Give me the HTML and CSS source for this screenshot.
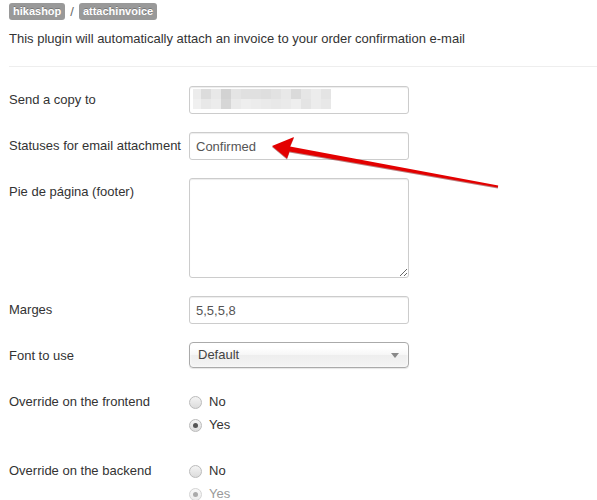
FILE: index.html
```html
<!DOCTYPE html>
<html lang="en">
<head>
  <meta charset="UTF-8" />
  <meta name="viewport" content="width=device-width, initial-scale=1.0" />
  <title>attachinvoice</title>
  <link rel="stylesheet" href="styles.css">
</head>
<body>
  <div class="crumbs">
    <span class="badge">hikashop</span>
    <span class="sep">/</span>
    <span class="badge">attachinvoice</span>
  </div>
  <p class="intro">This plugin will automatically attach an invoice to your order confirmation e-mail</p>
  <hr>

  <form class="form">
    <div class="group">
      <label class="ctl-label">Send a copy to</label>
      <div class="field">
        <div class="input blurred">
          <svg width="140" height="20" viewBox="0 0 140 20">
            <rect x="0" y="0" width="8" height="10" fill="#ececec"/>
            <rect x="8" y="0" width="10" height="10" fill="#dcdcdc"/>
            <rect x="18" y="0" width="10" height="10" fill="#e8e8e8"/>
            <rect x="28" y="0" width="10" height="10" fill="#d2d2d2"/>
            <rect x="38" y="0" width="10" height="10" fill="#e4e4e4"/>
            <rect x="48" y="0" width="20" height="10" fill="#e0e0e0"/>
            <rect x="68" y="0" width="10" height="10" fill="#dedede"/>
            <rect x="78" y="0" width="10" height="10" fill="#e2e2e2"/>
            <rect x="88" y="0" width="10" height="10" fill="#e8e8e8"/>
            <rect x="98" y="0" width="10" height="10" fill="#dadada"/>
            <rect x="108" y="0" width="10" height="10" fill="#e6e6e6"/>
            <rect x="118" y="0" width="10" height="10" fill="#ececec"/>
            <rect x="128" y="0" width="10" height="10" fill="#e4e4e4"/>
            <rect x="0" y="10" width="8" height="10" fill="#f0f0f0"/>
            <rect x="8" y="10" width="10" height="10" fill="#e8e8e8"/>
            <rect x="18" y="10" width="10" height="10" fill="#ececec"/>
            <rect x="28" y="10" width="10" height="10" fill="#d6d6d6"/>
            <rect x="38" y="10" width="10" height="10" fill="#eaeaea"/>
            <rect x="48" y="10" width="10" height="10" fill="#eeeeee"/>
            <rect x="58" y="10" width="10" height="10" fill="#ececec"/>
            <rect x="68" y="10" width="10" height="10" fill="#eaeaea"/>
            <rect x="78" y="10" width="10" height="10" fill="#e8e8e8"/>
            <rect x="88" y="10" width="10" height="10" fill="#eaeaea"/>
            <rect x="98" y="10" width="10" height="10" fill="#eeeeee"/>
            <rect x="108" y="10" width="10" height="10" fill="#e4e4e4"/>
            <rect x="118" y="10" width="10" height="10" fill="#ececec"/>
            <rect x="128" y="10" width="10" height="10" fill="#e8e8e8"/>
          </svg>
        </div>
      </div>
    </div>

    <div class="group">
      <label class="ctl-label">Statuses for email attachment</label>
      <div class="field"><input class="input" type="text" value="Confirmed"></div>
    </div>

    <div class="group">
      <label class="ctl-label">Pie de página (footer)</label>
      <div class="field"><textarea class="input area"></textarea></div>
    </div>

    <div class="group">
      <label class="ctl-label">Marges</label>
      <div class="field"><input class="input" type="text" value="5,5,5,8"></div>
    </div>

    <div class="group">
      <label class="ctl-label">Font to use</label>
      <div class="field">
        <div class="chosen"><span>Default</span><b class="caret"></b></div>
      </div>
    </div>

    <div class="group">
      <label class="ctl-label">Override on the frontend</label>
      <div class="field radios">
        <label class="radio"><span class="dot"></span>No</label>
        <label class="radio"><span class="dot on"></span>Yes</label>
      </div>
    </div>

    <div class="group">
      <label class="ctl-label">Override on the backend</label>
      <div class="field radios">
        <label class="radio"><span class="dot"></span>No</label>
        <label class="radio off"><span class="dot on"></span>Yes</label>
      </div>
    </div>
  </form>

  <svg class="arrow" width="597" height="500" viewBox="0 0 597 500">
    <polygon points="272,146 294,137 290,146.5 498.2,185.4 497.8,187.6 289.5,151.5 287,158.5" fill="#e30000"/>
  </svg>
</body>
</html>
```

FILE: styles.css
```css
* { box-sizing: border-box; }

body {
  margin: 0;
  padding: 3px 9px 0;
  position: relative;
  background: #fff;
  color: #333;
  font-family: "Liberation Sans", Arial, sans-serif;
  font-size: 13px;
  line-height: 18px;
  overflow: hidden;
  height: 500px;
}

.crumbs {
  display: flex;
  align-items: center;
  gap: 5px;
  height: 17px;
}

.badge {
  background: #999;
  color: #fff;
  font-size: 11px;
  font-weight: bold;
  line-height: 13px;
  padding: 2px 4px;
  border-radius: 3px;
  text-shadow: 0 -1px 0 rgba(0,0,0,0.25);
}

.sep {
  color: #666;
  font-size: 13px;
}

.intro {
  margin: 10px 0 9px;
}

hr {
  margin: 18px -9px 18px 0;
  border: 0;
  border-top: 1px solid #eee;
}

.form {
  padding-top: 1px;
}

.group {
  display: grid;
  grid-template-columns: 180px 1fr;
  margin-bottom: 18px;
}

.ctl-label {
  padding-top: 5px;
  white-space: nowrap;
}

.input {
  display: block;
  width: 220px;
  height: 28px;
  padding: 4px 6px;
  border: 1px solid #ccc;
  border-radius: 3px;
  box-shadow: inset 0 1px 1px rgba(0,0,0,0.075);
  font-family: inherit;
  font-size: 13px;
  line-height: 18px;
  color: #555;
  background: #fff;
}

.blurred {
  padding: 2px 3px;
}

.blurred svg {
  display: block;
}

.area {
  height: 100px;
  resize: vertical;
}

.chosen {
  position: relative;
  width: 220px;
  height: 26px;
  margin-bottom: 2px;
  padding: 3px 8px;
  border: 1px solid #aaa;
  border-radius: 4px;
  background: linear-gradient(#fff 20%, #f6f6f6 50%, #eee 52%, #f4f4f4 100%);
  box-shadow: inset 0 0 3px #fff, 0 1px 1px rgba(0,0,0,0.1);
  color: #444;
}

.caret {
  position: absolute;
  right: 9px;
  top: 10px;
  border-left: 4px solid transparent;
  border-right: 4px solid transparent;
  border-top: 5px solid #888;
}

.radios {
  display: flex;
  flex-direction: column;
  gap: 5px;
  padding: 5px 0;
}

.radio {
  display: flex;
  align-items: center;
  height: 18px;
}

.dot {
  width: 13px;
  height: 13px;
  margin-right: 7px;
  border: 1px solid #bbb;
  border-radius: 50%;
  background: linear-gradient(#f4f4f4, #dcdcdc);
  position: relative;
}

.dot.on::after {
  content: "";
  position: absolute;
  left: 3px;
  top: 3px;
  width: 5px;
  height: 5px;
  border-radius: 50%;
  background: #555;
}

.radio.off {
  color: #999;
}

.radio.off .dot {
  border-color: #d4d4d4;
  background: linear-gradient(#f8f8f8, #ececec);
}

.radio.off .dot.on::after {
  background: #aaa;
}

.arrow {
  position: absolute;
  top: 0;
  left: 0;
  pointer-events: none;
  filter: drop-shadow(0 1px 0.5px rgba(120,0,0,0.5));
}
```
